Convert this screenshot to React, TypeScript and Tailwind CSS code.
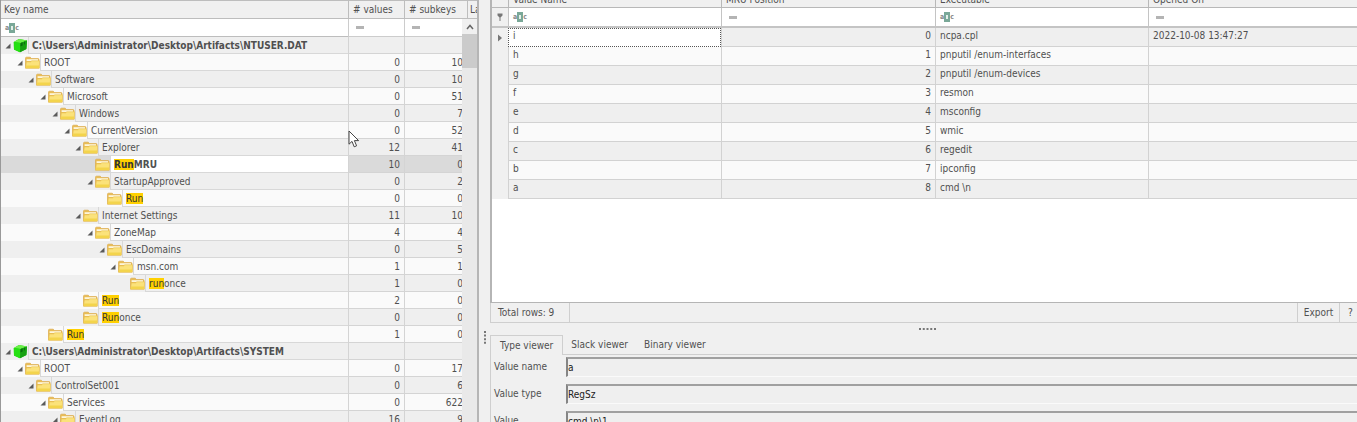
import { useState } from "react";

type Node = {
  level: number;
  name: string;
  mark?: number;
  values?: number;
  subkeys?: number;
  leaf?: boolean;
  hive?: boolean;
  selected?: boolean;
};

const nodes: Node[] = [
  { level: 0, name: "C:\\Users\\Administrator\\Desktop\\Artifacts\\NTUSER.DAT", hive: true },
  { level: 1, name: "ROOT", values: 0, subkeys: 10 },
  { level: 2, name: "Software", values: 0, subkeys: 10 },
  { level: 3, name: "Microsoft", values: 0, subkeys: 51 },
  { level: 4, name: "Windows", values: 0, subkeys: 7 },
  { level: 5, name: "CurrentVersion", values: 0, subkeys: 52 },
  { level: 6, name: "Explorer", values: 12, subkeys: 41 },
  { level: 7, name: "RunMRU", mark: 3, values: 10, subkeys: 0, leaf: true, selected: true },
  { level: 7, name: "StartupApproved", values: 0, subkeys: 2 },
  { level: 8, name: "Run", mark: 3, values: 0, subkeys: 0, leaf: true },
  { level: 6, name: "Internet Settings", values: 11, subkeys: 10 },
  { level: 7, name: "ZoneMap", values: 4, subkeys: 4 },
  { level: 8, name: "EscDomains", values: 0, subkeys: 5 },
  { level: 9, name: "msn.com", values: 1, subkeys: 1 },
  { level: 10, name: "runonce", mark: 3, values: 1, subkeys: 0, leaf: true },
  { level: 6, name: "Run", mark: 3, values: 2, subkeys: 0, leaf: true },
  { level: 6, name: "Runonce", mark: 3, values: 0, subkeys: 0, leaf: true },
  { level: 3, name: "Run", mark: 3, values: 1, subkeys: 0, leaf: true },
  { level: 0, name: "C:\\Users\\Administrator\\Desktop\\Artifacts\\SYSTEM", hive: true },
  { level: 1, name: "ROOT", values: 0, subkeys: 17 },
  { level: 2, name: "ControlSet001", values: 0, subkeys: 6 },
  { level: 3, name: "Services", values: 0, subkeys: 622 },
  { level: 4, name: "EventLog", values: 16, subkeys: 9 },
];

const commands = [
  ["i", "ncpa.cpl", "2022-10-08 13:47:27"],
  ["h", "pnputil /enum-interfaces", ""],
  ["g", "pnputil /enum-devices", ""],
  ["f", "resmon", ""],
  ["e", "msconfig", ""],
  ["d", "wmic", ""],
  ["c", "regedit", ""],
  ["b", "ipconfig", ""],
  ["a", "cmd \\n", ""],
];

function Folder() {
  return (
    <svg className="h-[13px] w-[15px] shrink-0" viewBox="0 0 15 13" aria-hidden="true">
      <path d="M0.5 12V2.2Q0.5 1.2 1.5 1.2H5.2L6.6 2.6H13Q14 2.6 14 3.6V12Z" fill="#e9bd55" stroke="#dba94b" strokeWidth="0.7" />
      <path d="M1.6 3.2H13V5H1.6Z" fill="#fdf6dc" />
      <path d="M0.6 12.3L1.3 5.9H5.6L6.8 4.8H14.6L14.3 12.3Z" fill="#fbe27a" stroke="#e8bf52" strokeWidth="0.6" />
      <path d="M1.2 9.5H14L13.9 12H1Z" fill="#f3d44c" />
    </svg>
  );
}

function Cube() {
  return (
    <svg className="h-[15px] w-[15px] shrink-0" viewBox="0 0 15 15" aria-hidden="true">
      <path d="M0.8 4L6 1L14 2.4L13.4 11L7 14.2L1 11.5Z" fill="#16c80c" />
      <path d="M0.8 4L6 1L14 2.4L7.6 5Z" fill="#6bf048" />
      <path d="M0.8 4L7.6 5L7 14.2L1 11.5Z" fill="#25e012" />
      <path d="M7.6 5L14 2.4L13.4 11L7 14.2Z" fill="#16a012" />
      <path d="M7.6 5L9.6 4.2V7.6L7.4 8.6Z" fill="#0b6c10" />
      <path d="M11.4 3.6V6.4" stroke="#0b6c10" strokeWidth="1" />
    </svg>
  );
}

function TextFilter() {
  return (
    <button aria-label="Contains" className="flex shrink-0 items-center text-[7px] leading-[10px] font-bold text-[#888]">
      <span>a</span>
      <svg className="h-[10px] w-[6px]" viewBox="0 0 6 10" aria-hidden="true">
        <rect width="6" height="10" fill="#7aa898" />
        <rect x="2" y="3" width="2" height="4" fill="#e3efea" />
      </svg>
      <span>c</span>
    </button>
  );
}

function EqualsFilter() {
  return (
    <button aria-label="Equals" className="flex w-[8px] shrink-0 flex-col">
      <span className="h-[3px] w-full bg-[#b4b4b4]" />
    </button>
  );
}

function FilterCell({ label, equals }: { label: string; equals?: boolean }) {
  return (
    <div className={equals ? "flex items-center pl-[7px]" : "flex items-center pl-1"}>
      {equals ? <EqualsFilter /> : <TextFilter />}
      <input aria-label={label} className="h-3 w-0 min-w-0 flex-1 bg-transparent outline-none" />
    </div>
  );
}

function TreeRow({ node, odd }: { node: Node; odd: boolean }) {
  const shade = node.selected ? "bg-[#dadada]" : odd ? "bg-[#fafafa]" : "bg-[#efefef]";
  const num = "border-b border-l border-[#d4d4d4] p-0 pt-[2px] pr-1 text-right";
  const mark = node.mark ?? 0;
  return (
    <tr className={`h-[17px] ${shade}`}>
      <td className="p-0">
        <div className="flex h-[17px] items-center" style={{ paddingLeft: Math.round(node.level * 11.7) + 4 }}>
          <div className="flex w-2 shrink-0">
            {!node.leaf && (
              <button aria-label={`Collapse ${node.name}`} className="h-[6px] w-[6px]">
                <svg className="h-[6px] w-[6px]" viewBox="0 0 6 6" aria-hidden="true">
                  <path d="M5.5 0.5V5.5H0.5Z" fill="#5a5a5a" />
                </svg>
              </button>
            )}
          </div>
          {node.hive ? <Cube /> : <Folder />}
          <div
            className={`h-full min-w-0 flex-1 border-b border-l border-[#d8d8d8] pt-[2px] pl-[3px] whitespace-nowrap ${
              node.selected ? "bg-white" : ""
            } ${node.hive || node.selected ? "font-bold" : ""}`}
          >
            {mark > 0 && <mark className="bg-[#ffd000] text-[#333]">{node.name.slice(0, mark)}</mark>}
            {node.name.slice(mark)}
          </div>
        </div>
      </td>
      {node.hive ? (
        <>
          <td className={num} />
          <td className={num} />
        </>
      ) : (
        <>
          <td className={num}>{node.values}</td>
          <td className={num}>{node.subkeys}</td>
        </>
      )}
      <td className="border-b border-[#d4d4d4] p-0" />
    </tr>
  );
}

function KeyTree() {
  const head = "border-l border-[#bdbdbd] p-0 pl-1 text-left font-normal overflow-hidden whitespace-nowrap";
  return (
    <section className="relative w-[479px] shrink-0 overflow-hidden border-r-2 border-l border-[#b5b5b5] border-l-[#999]">
      <table className="w-full table-fixed border-separate border-spacing-0">
        <colgroup>
          <col />
          <col className="w-[56px]" />
          <col className="w-[63px]" />
          <col className="w-[10px]" />
        </colgroup>
        <thead>
          <tr className="h-[19px] bg-[#f0f0f0]">
            <th className="border-t border-b border-[#bdbdbd] p-0 pl-[3px] text-left font-normal">Key name</th>
            <th className={`border-t border-b ${head}`}># values</th>
            <th className={`border-t border-b ${head}`}># subkeys</th>
            <th className="overflow-hidden border-t border-b border-l border-[#bdbdbd] p-0 pl-[2px] text-left font-normal">La</th>
          </tr>
          <tr className="h-[18px] bg-white">
            <td className="border-b border-[#bdbdbd] p-0"><FilterCell label="Filter key name" /></td>
            <td className="border-b border-l border-[#ccc] p-0"><FilterCell label="Filter values" equals /></td>
            <td className="border-b border-l border-[#ccc] p-0"><FilterCell label="Filter subkeys" equals /></td>
            <td className="border-b border-[#ccc] p-0" />
          </tr>
        </thead>
        <tbody>
          {nodes.map((n, i) => (
            <TreeRow key={i} node={n} odd={i % 2 === 1} />
          ))}
        </tbody>
      </table>
      <div className="absolute top-[19px] right-0 bottom-0 flex w-[15px] flex-col bg-[#e9e9e9]">
        <button aria-label="Scroll up" className="flex h-[15px] items-center justify-center bg-[#f0f0f0]">
          <svg className="h-[6px] w-[8px]" viewBox="0 0 8 6" aria-hidden="true">
            <path d="M1 5L4 1.5L7 5" fill="none" stroke="#666" strokeWidth="1.5" />
          </svg>
        </button>
        <div className="h-[34px] bg-[#cbcbcb]" />
      </div>
    </section>
  );
}

function HeaderText({ children }: { children: string }) {
  return (
    <div className="flex h-[7px] items-end overflow-hidden pl-1">
      <span className="shrink-0 leading-[14px]">{children}</span>
    </div>
  );
}

function ValuesGrid() {
  const cell = "border-b border-l border-[#d2d2d2] p-0";
  const head = "border-b border-l border-[#b8b8b8] p-0 text-left font-normal";
  const filter = "border-b-2 border-l border-[#c4c4c4] p-0";
  return (
    <div className="min-h-0 flex-1 overflow-hidden border-b border-l-2 border-[#b5b5b5] bg-white">
      <table className="w-full table-fixed border-separate border-spacing-0">
        <colgroup>
          <col className="w-[16px]" />
          <col className="w-[213px]" />
          <col className="w-[214px]" />
          <col className="w-[213px]" />
          <col />
        </colgroup>
        <thead>
          <tr className="h-2 bg-[#f0f0f0]">
            <td className="border-b border-[#b8b8b8] p-0" />
            <th className={head}><HeaderText>Value Name</HeaderText></th>
            <th className={head}><HeaderText>MRU Position</HeaderText></th>
            <th className={head}><HeaderText>Executable</HeaderText></th>
            <th className={head}><HeaderText>Opened On</HeaderText></th>
          </tr>
          <tr className="h-5">
            <td className="border-b-2 border-[#c4c4c4] bg-[#f0f0f0] p-0">
              <svg className="mx-auto h-[8px] w-[6px]" viewBox="0 0 6 8" aria-hidden="true">
                <path d="M0.5 0.5H5.5V2.5L3.5 4.5V8H2.5V4.5L0.5 2.5Z" fill="#777" />
              </svg>
            </td>
            <td className={filter}><FilterCell label="Filter value name" /></td>
            <td className={filter}><FilterCell label="Filter MRU position" equals /></td>
            <td className={filter}><FilterCell label="Filter executable" /></td>
            <td className={filter}><FilterCell label="Filter opened on" equals /></td>
          </tr>
        </thead>
        <tbody>
          {commands.map(([name, exe, opened], i) => (
            <tr key={name} className={`h-[19px] leading-[14px] ${i % 2 ? "bg-[#fafafa]" : "bg-[#efefef]"}`}>
              <td className="bg-[#f0f0f0] p-0">
                {i === 0 && (
                  <svg className="mx-auto h-[8px] w-[4px]" viewBox="0 0 4 8" aria-hidden="true">
                    <path d="M0 0.5L4 4L0 7.5Z" fill="#777" />
                  </svg>
                )}
              </td>
              <td
                className={
                  i === 0
                    ? "border border-dotted border-[#555] bg-white p-0 pb-[3px] pl-1"
                    : `${cell} pb-[3px] pl-1`
                }
              >
                {name}
              </td>
              <td className={`${cell} pr-1 pb-[3px] text-right`}>{i}</td>
              <td className={`${cell} pb-[3px] pl-1`}>{exe}</td>
              <td className={`${cell} pb-[3px] pl-1`}>{opened}</td>
            </tr>
          ))}
        </tbody>
      </table>
    </div>
  );
}

const fields = [
  { id: "value-name", label: "Value name", value: "a" },
  { id: "value-type", label: "Value type", value: "RegSz" },
  { id: "value-data", label: "Value", value: "cmd \\n\\1" },
];

const tabs = ["Type viewer", "Slack viewer", "Binary viewer"];

function ValueViewer() {
  const [active, setActive] = useState(tabs[0]);
  return (
    <div className="shrink-0">
      <div role="tablist" className="flex h-5">
        {tabs.map((t) => (
          <button
            key={t}
            role="tab"
            aria-selected={t === active}
            onClick={() => setActive(t)}
            className={
              t === active
                ? "border-t border-r border-l border-[#cfcfcf] px-[9px] whitespace-nowrap"
                : "border-t border-b border-t-transparent border-b-[#cfcfcf] px-2 whitespace-nowrap"
            }
          >
            {t}
          </button>
        ))}
        <div className="flex-1 border-b border-[#cfcfcf]" />
      </div>
      <div className="flex h-[67px] flex-col gap-[7px] overflow-hidden border-l border-[#cfcfcf] pt-[2px] pl-[3px]">
        {fields.map((f) => (
          <div key={f.id} className="flex h-5 shrink-0">
            <label htmlFor={f.id} className="w-[72px] shrink-0 leading-5">
              {f.label}
            </label>
            <input
              id={f.id}
              readOnly
              defaultValue={f.value}
              className="h-5 min-w-0 flex-1 border-t-2 border-b border-l-2 border-[#a0a0a0] border-b-[#fafafa] border-l-[#858585] bg-[#efefef] pb-[1px] text-[#222] outline-none"
            />
          </div>
        ))}
      </div>
    </div>
  );
}

export default function App() {
  return (
    <main className="relative flex h-screen overflow-hidden bg-[#f0f0f0] font-['DejaVu_Sans_Condensed','DejaVu_Sans',sans-serif] text-[10px] leading-[14px] text-[#505050]">
      <KeyTree />
      <div className="flex w-[11px] shrink-0 flex-col items-center pt-[331px]">
        <svg className="h-[13px] w-[2px]" viewBox="0 0 2 13" aria-hidden="true">
          <path d="M1 0V13" stroke="#777" strokeWidth="2" strokeDasharray="2 1.6" />
        </svg>
      </div>
      <section className="flex min-w-0 flex-1 flex-col">
        <ValuesGrid />
        <div className="flex h-5 shrink-0 items-stretch border-b border-l border-[#cfcfcf]">
          <span className="flex w-[79px] items-center border-r border-[#cfcfcf] pl-[7px] whitespace-nowrap">
            Total rows: 9
          </span>
          <span className="flex-1" />
          <button className="w-[42px] border-l border-[#cfcfcf] text-center">Export</button>
          <button aria-label="Help" className="w-[18px] border-l border-[#cfcfcf] pl-1 text-center">?</button>
        </div>
        <div className="flex h-3 shrink-0 items-center justify-center pl-2">
          <svg className="h-[2px] w-[17px]" viewBox="0 0 17 2" aria-hidden="true">
            <path d="M0 1H17" stroke="#777" strokeWidth="2" strokeDasharray="2 1.75" />
          </svg>
        </div>
        <ValueViewer />
      </section>
      <svg className="absolute top-[130px] left-[348px] h-[18px] w-[12px]" viewBox="0 0 12 18" aria-hidden="true">
        <path d="M1 1V14.2L4 11.4L6.2 16.8L8.6 15.8L6.4 10.6H10.6Z" fill="#fff" stroke="#444" strokeWidth="1" />
      </svg>
    </main>
  );
}
